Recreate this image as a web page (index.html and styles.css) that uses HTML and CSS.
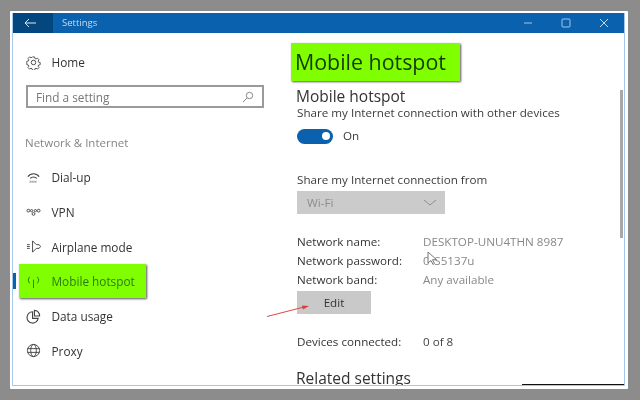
FILE: index.html
```html
<!DOCTYPE html>
<html lang="en">
<head>
<meta charset="utf-8">
<title>Settings</title>
<link rel="stylesheet" href="styles.css">
</head>
<body>
<div class="window">
  <div class="frame">
    <header class="titlebar">
      <div class="back"><svg width="12" height="10" viewBox="0 0 12 10"><path d="M5 1L1 5l4 4M1 5h11" fill="none" stroke="#dbe8f5" stroke-width="1"/></svg></div>
      <div class="title">Settings</div>
      <div class="controls">
        <svg width="10" height="10" viewBox="0 0 10 10"><path d="M1 5h8" stroke="#a9c6e4" stroke-width="1"/></svg>
        <svg width="10" height="10" viewBox="0 0 10 10"><rect x="1" y="1" width="8" height="8" rx="1" fill="none" stroke="#a9c6e4"/></svg>
        <svg width="10" height="10" viewBox="0 0 10 10"><path d="M1 1l8 8M9 1l-8 8" stroke="#c4d8ec" stroke-width="1"/></svg>
      </div>
    </header>
    <div class="body">
      <nav class="side">
        <div class="home row">
          <svg class="ico" width="15" height="15" viewBox="0 0 16 16"><circle cx="8" cy="8" r="2.400" fill="none" stroke="#444"/><path d="M6.600 1h2.800l.4 2 1.400.6 1.700-1.100 2 2-1.100 1.700.6 1.400 2 .4v2.800l-2 .4-.6 1.400 1.100 1.700-2 2-1.700-1.100-1.400.6-.4 2H6.600l-.4-2-1.400-.6-1.700 1.100-2-2 1.100-1.700-.6-1.400-2-.4V6.400l2-.4.6-1.400-1.100-1.700 2-2 1.700 1.100 1.400-.6z" transform="translate(1.200 1.200) scale(.85)" fill="none" stroke="#444" stroke-width="1.100"/></svg>
          <span>Home</span>
        </div>
        <div class="search"><span>Find a setting</span>
          <svg width="12" height="12" viewBox="0 0 12 12"><circle cx="7.500" cy="4.500" r="3.200" fill="none" stroke="#888"/><path d="M5 7L1 11" stroke="#888"/></svg>
        </div>
        <div class="group">Network &amp; Internet</div>
        <div class="row">
          <svg class="ico" width="15" height="15" viewBox="0 0 16 16"><path d="M2 7c3-4 9-4 12 0M4.500 9c2-2 5-2 7 0" fill="none" stroke="#444" stroke-width="1.300"/><path d="M4 12.500h8" stroke="#777" stroke-width="2" stroke-dasharray="1 1"/></svg>
          <span>Dial-up</span>
        </div>
        <div class="row">
          <svg class="ico" width="15" height="15" viewBox="0 0 16 16"><g fill="none" stroke="#444"><circle cx="2.500" cy="6" r="1.500"/><circle cx="13.500" cy="6" r="1.500"/><circle cx="8" cy="9.500" r="1.500"/><circle cx="6" cy="6" r="1.200"/><circle cx="10" cy="6" r="1.200"/></g></svg>
          <span>VPN</span>
        </div>
        <div class="row">
          <svg class="ico" width="15" height="15" viewBox="0 0 16 16"><path d="M1 6h3M1 8h3M1 10h3M7 2l4 4h3l1.500 2-1.500 2h-3l-4 4V2z" fill="none" stroke="#444"/></svg>
          <span>Airplane mode</span>
        </div>
        <div class="row hot-row">
          <i class="marker"></i>
          <div class="hot">
            <svg class="ico" width="15" height="15" viewBox="0 0 16 16"><path d="M8 6v9M4 3c-2 2-2 5 0 7M12 3c2 2 2 5 0 7" fill="none" stroke="#2c7a10"/></svg>
            <span>Mobile hotspot</span>
          </div>
        </div>
        <div class="row">
          <svg class="ico" width="15" height="15" viewBox="0 0 16 16"><path d="M7 3a6 6 0 1 0 6 7H7z" fill="none" stroke="#444" stroke-width="1.200"/><path d="M9 1.500a5.500 5.500 0 0 1 5.500 6H9z" fill="none" stroke="#444" stroke-width="1.200"/></svg>
          <span>Data usage</span>
        </div>
        <div class="row">
          <svg class="ico" width="15" height="15" viewBox="0 0 16 16"><g fill="none" stroke="#444"><circle cx="8" cy="8" r="6.500"/><ellipse cx="8" cy="8" rx="3" ry="6.500"/><path d="M1.500 6h13M1.500 10h13"/></g></svg>
          <span>Proxy</span>
        </div>
      </nav>
      <main class="content">
        <h1 class="banner">Mobile hotspot</h1>
        <h2 class="heading">Mobile hotspot</h2>
        <p class="line">Share my Internet connection with other devices</p>
        <div class="toggle-row"><i class="toggle"><b></b></i><span>On</span></div>
        <p class="line from">Share my Internet connection from</p>
        <div class="select"><span>Wi-Fi</span><svg width="14" height="8" viewBox="0 0 14 8"><path d="M1 1l6 5 6-5" fill="none" stroke="#8d8d8d"/></svg></div>
        <dl class="info">
          <dt>Network name:</dt><dd>DESKTOP-UNU4THN 8987</dd>
          <dt>Network password:</dt><dd>0&#8202;&#8202;&#8202;&#8202;S5137u</dd>
          <dt>Network band:</dt><dd>Any available</dd>
        </dl>
        <div class="edit">Edit</div>
        <dl class="info devices"><dt>Devices connected:</dt><dd>0 of 8</dd></dl>
        <h2 class="heading related">Related settings</h2>
        <i class="scrollbar"></i>
      </main>
    </div>
    <i class="base"></i>
  </div>
  <svg class="arrow" width="44" height="14" viewBox="0 0 44 14"><path d="M1 12.500L38 3" stroke="#e2504f" stroke-width="1.200"/><path d="M43 2L36 1.500l1 4z" fill="#d8403f"/></svg>
  <svg class="cursor" width="11" height="15" viewBox="0 0 11 15"><path d="M1 1v11l3-2.500 2 4 1.500-1-2-3.800h4z" fill="#fff" stroke="#777"/></svg>
</div>
</body>
</html>
```
FILE: styles.css
```css
* { box-sizing: border-box; }
html, body { margin: 0; height: 100%; }
body { background: #8c8c8c; padding: 11px 12px 11px 10px; font: 12px/16px "Open Sans", sans-serif; color: #3a3a3a; overflow: hidden; }
.window { position: relative; height: 378px; background: #fff; padding: 2px 3px 3px 2px; border-radius: 1px; filter: blur(.35px); }
.frame { position: relative; height: 100%; border: 1px solid #a5c8ea; border-top: 0; display: flex; flex-direction: column; overflow: hidden; }
.titlebar { height: 20px; flex: none; background: #0a61ae; display: flex; align-items: center; color: #c9dcef; }
.back { width: 40px; height: 20px; background: #04477f; display: flex; align-items: center; justify-content: center; padding-right: 7px; }
.title { margin-left: 9px; font-size: 9.500px; }
.controls { margin-left: auto; display: flex; gap: 28px; padding-right: 15px; }
.body { flex: 1; display: flex; min-height: 0; }
.side { width: 284px; flex: none; padding-top: 12px; position: relative; }
.row { height: 34.700px; display: flex; align-items: center; padding-left: 12.500px; gap: 11px; font-size: 11.800px; color: #333; }
.ico { flex: none; }
.home { height: 34px; }
.search { margin: 6px 0 0 13px; width: 238px; height: 23px; border: 2px solid #9a9a9a; display: flex; align-items: center; justify-content: space-between; padding: 0 8px; color: #777; font-size: 11.800px; }
.group { margin: 27px 0 9px 12px; color: #858585; font-size: 11.500px; }
.hot-row { position: relative; padding-left: 6px; }
.marker { position: absolute; left: 0; top: 9px; width: 3px; height: 16px; background: #0a61ae; }
.hot { width: 127px; height: 34px; background: #80ff00; box-shadow: 1px 1px 2px #555; display: flex; align-items: center; gap: 11px; padding-left: 6.500px; color: #2c7a10; }
.content { position: relative; flex: 1; }
.banner { margin: 10px 0 0 -6px; width: 169px; height: 38px; background: #80ff00; box-shadow: 1px 1px 2px #555; font-size: 21.400px; line-height: 37px; font-weight: 400; padding-left: 4px; color: #143c00; }
.heading { margin: 5px 0 0 -1px; font-size: 15.500px; line-height: 20px; font-weight: 400; color: #333; }
.line { margin: -1px 0 1px; height: 16px; font-size: 11.650px; line-height: 16px; }
.toggle-row { display: flex; align-items: center; gap: 10px; margin-top: 7px; height: 16px; font-size: 11.650px; }
.toggle { display: block; width: 36px; height: 15px; border-radius: 8px; background: #0a61ae; position: relative; }
.toggle b { position: absolute; right: 3px; top: 3.500px; width: 8px; height: 8px; border-radius: 50%; background: #fff; }
.from { margin-top: 28px; }
.select { width: 148px; height: 23px; margin-top: 3px; background: #cbcbcb; color: #8d8d8d; display: flex; align-items: center; justify-content: space-between; padding: 0 8px 0 10px; font-size: 11.650px; }
.info { display: grid; grid-template-columns: 126px 1fr; grid-auto-rows: 19px; margin: 18px 0 0; font-size: 11.650px; line-height: 19px; }
.info dt { color: #333; }
.info dd { margin: 0; color: #888; }
.edit { width: 74px; height: 23px; margin-top: 2px; background: #c9c9c9; text-align: center; line-height: 23px; font-size: 11.650px; color: #333; }
.devices { margin-top: 18px; }
.devices dd { color: #444; }
.related { margin-top: 17px; }
.scrollbar { position: absolute; right: 1px; top: 57px; width: 3px; height: 148px; background: #a8a8a8; }
.base { position: absolute; right: 0; bottom: 0; width: 102px; height: 1px; background: #111; }
.arrow { position: absolute; left: 256px; top: 293px; }
.cursor { position: absolute; left: 417px; top: 240px; }
```
